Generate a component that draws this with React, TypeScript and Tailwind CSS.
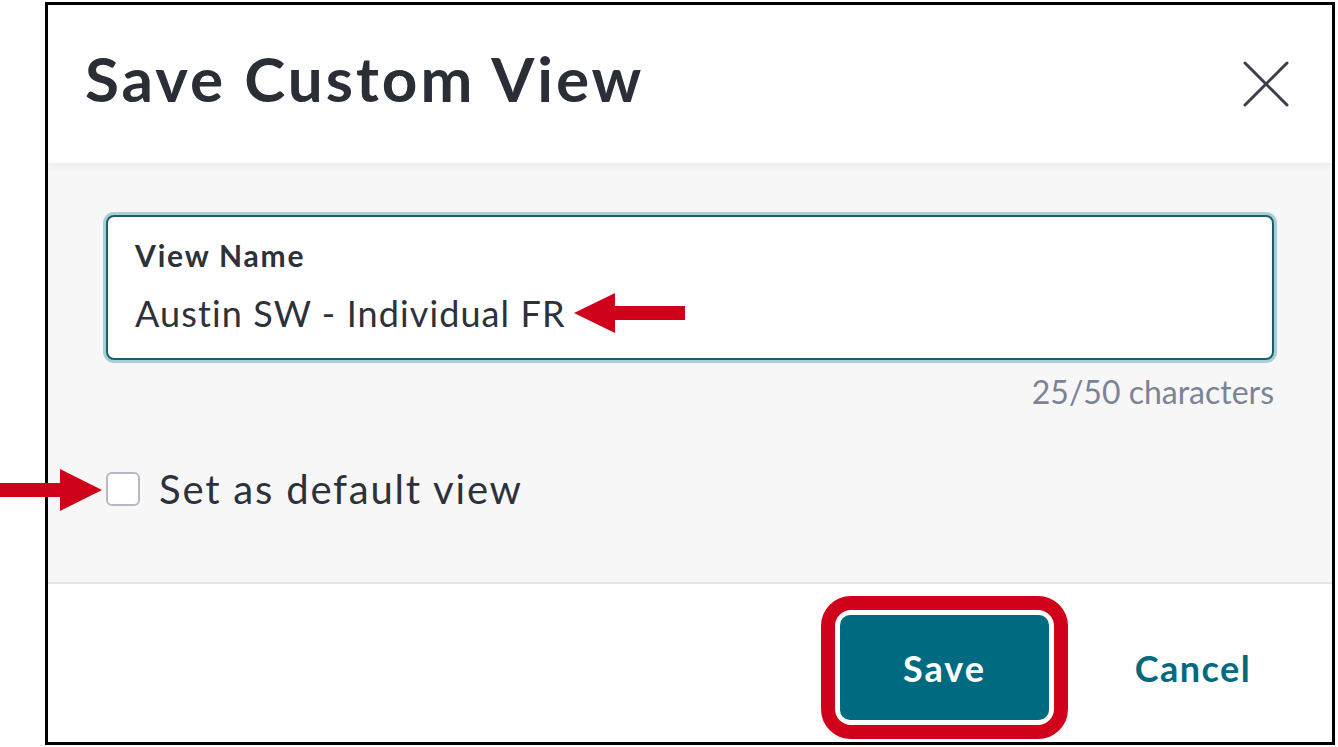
import React from "react";

function CloseIcon() {
  return (
    <svg width="46" height="46" viewBox="0 0 46 46" fill="none">
      <path d="M2 2 L44 44 M44 2 L2 44" stroke="#3a3f49" strokeWidth="3" strokeLinecap="round" />
    </svg>
  );
}

function ArrowLeft() {
  return (
    <svg width="111" height="40" viewBox="0 0 111 40">
      <polygon points="0,20 41,0 41,40" fill="#d0021b" />
      <rect x="40" y="13" width="71" height="14" fill="#d0021b" />
    </svg>
  );
}

function ArrowRight() {
  return (
    <svg width="102" height="42" viewBox="0 0 102 42">
      <rect x="0" y="14" width="61" height="14" fill="#d0021b" />
      <polygon points="60,0 102,21 60,42" fill="#d0021b" />
    </svg>
  );
}

export default function App() {
  return (
    <div
      className="relative w-[1338px] h-[747px] bg-white overflow-hidden"
      style={{ fontFamily: "Lato, 'Open Sans', sans-serif" }}
    >
      <div className="ml-[45px] mt-[2px] w-[1290px] h-[743px] border-[3px] border-black flex flex-col">
        <header className="relative z-10 h-[158px] shrink-0 bg-white flex items-center justify-between pl-[37px] pr-[43px] shadow-[0_3px_8px_rgba(0,0,0,0.05)]">
          <h1 className="mb-[12px] text-[62px] font-bold tracking-[3px] text-[#2a2e37] leading-none">Save Custom View</h1>
          <CloseIcon />
        </header>

        <main className="flex-1 bg-[#f7f7f7] px-[58px] pt-[52px] flex flex-col">
          <div className="h-[145px] rounded-[8px] border-2 border-[#1f5d6c] bg-white shadow-[0_0_0_3px_#a8cfd7] pl-[27px] pt-[23px]">
            <div className="text-[30px] font-bold tracking-[1.8px] text-[#2d313a] leading-none">View Name</div>
            <div className="mt-[23px] flex items-center">
              <span className="text-[36px] tracking-[1.1px] text-[#2d313a] leading-none">Austin SW - Individual FR</span>
              <span className="ml-[8px] flex">
                <ArrowLeft />
              </span>
            </div>
          </div>
          <div className="mt-[16px] text-right text-[32px] leading-none text-[#7b8496]">25/50 characters</div>
          <div className="mt-[61px] flex items-center">
            <span className="w-[34px] h-[34px] rounded-[6px] border-2 border-[#b6b9c3] bg-white" />
            <span className="ml-[19px] text-[40px] tracking-[1.8px] leading-none text-[#2d313a]">Set as default view</span>
          </div>
        </main>

        <footer className="h-[160px] shrink-0 bg-white border-t-2 border-[#e6e6e6] flex items-start justify-end pt-[12px] pr-[64px]">
          <div className="rounded-[30px] border-[14px] border-[#d0021b] p-[5px] bg-white">
            <button className="w-[209px] h-[105px] rounded-[10px] bg-[#006b80] text-white text-[36px] font-bold tracking-[2px] flex items-center justify-center">
              Save
            </button>
          </div>
          <button className="ml-[50px] w-[150px] h-[143px] text-[36px] font-bold tracking-[1.5px] text-[#006b80] flex items-center justify-center">
            Cancel
          </button>
        </footer>
      </div>

      <div className="absolute left-0 top-[469px]">
        <ArrowRight />
      </div>
    </div>
  );
}
